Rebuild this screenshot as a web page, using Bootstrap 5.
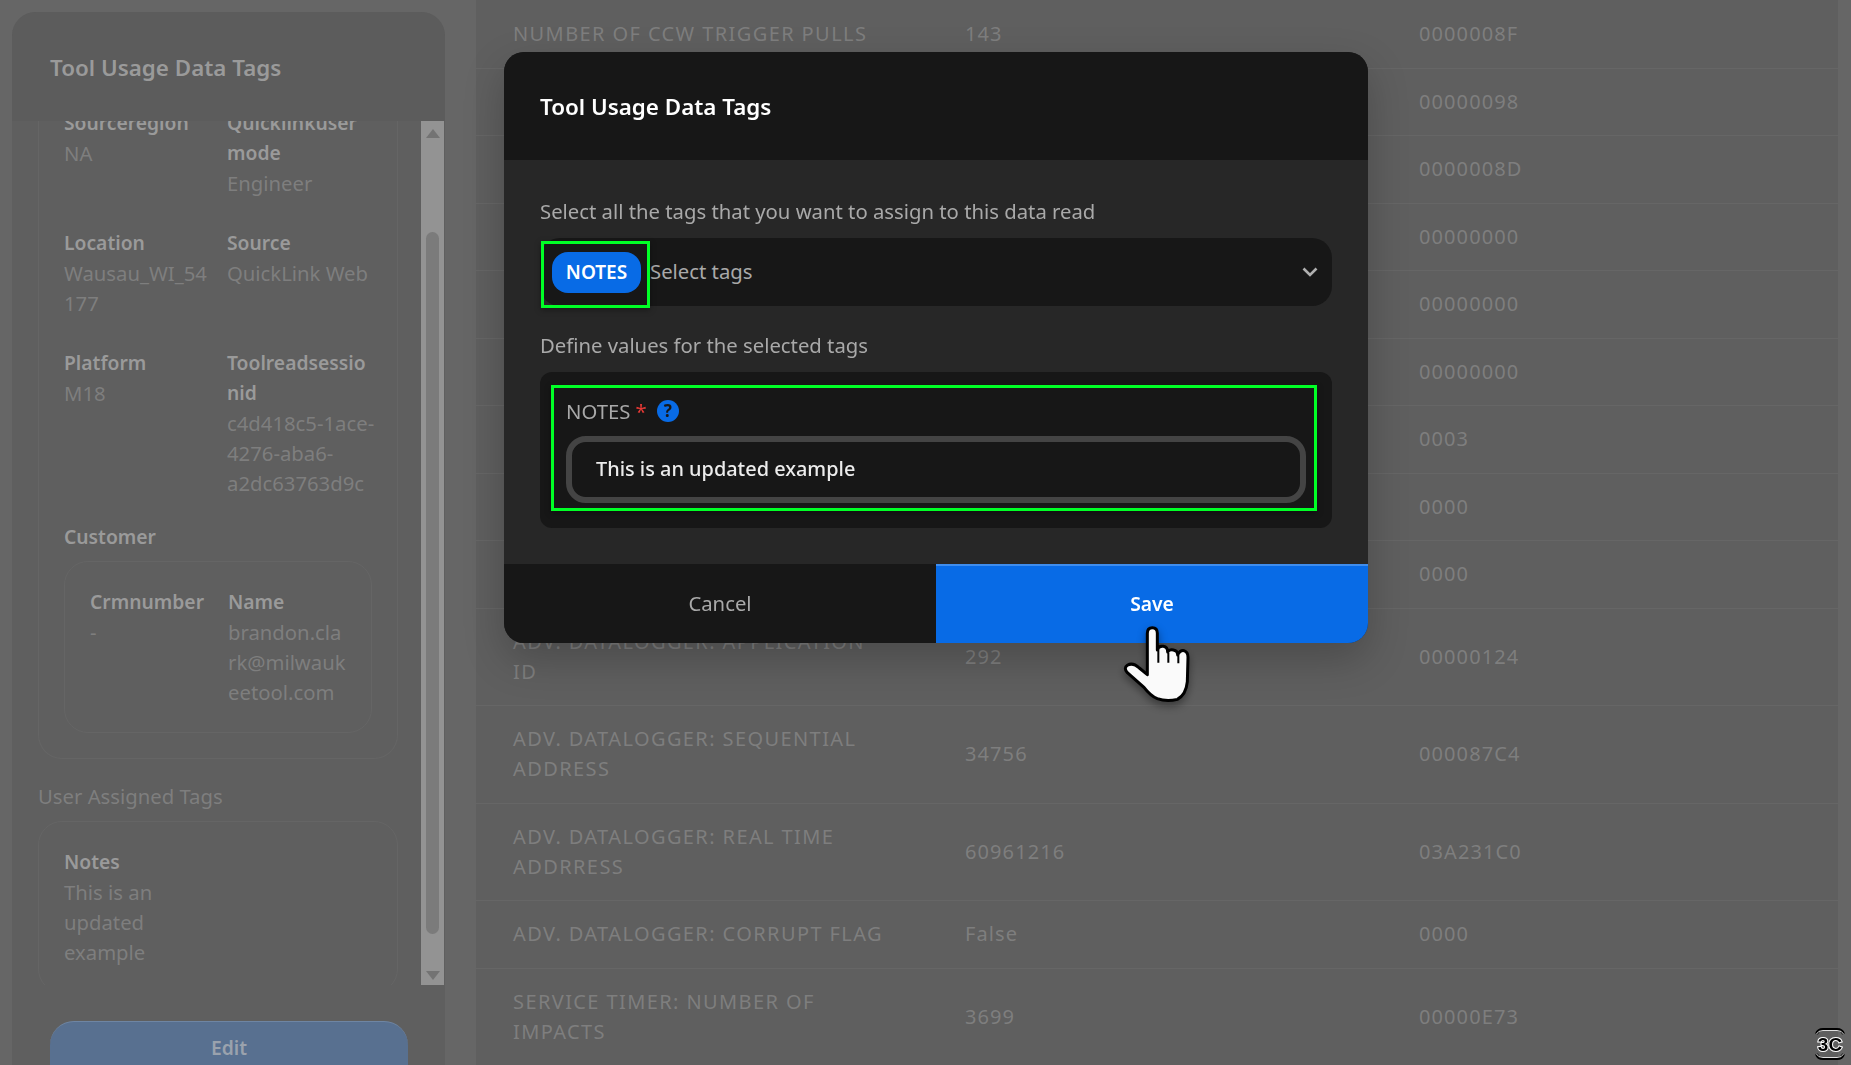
<!DOCTYPE html>
<html lang="en">
  <head>
    <meta charset="UTF-8" />
    <meta name="viewport" content="width=device-width, initial-scale=1.0" />
    <title>Tool Usage Data Tags</title>
    <link
      href="https://cdn.jsdelivr.net/npm/bootstrap@5.3.3/dist/css/bootstrap.min.css"
      rel="stylesheet"
    />
    <style>
      html,
      body {
        height: 100%;
        overflow: hidden;
      }
      body {
        background-color: #666666;
        font-family: "Noto Sans", "Liberation Sans", sans-serif;
        font-size: 20.3px;
        line-height: 30px;
        color: #7e7e7e;
      }
      .page-wrap {
        height: 1065px;
      }
      /* left panel */
      .side-col {
        width: 476px;
        padding: 12px 31px 0 12px;
        flex: none;
      }
      .side-panel {
        height: 100%;
        background-color: #5f5f5f;
        border-radius: 24px 24px 0 0;
      }
      .side-head {
        height: 108.5px;
        padding: 3px 0 0 38px;
        background-color: #5c5c5c;
        border-radius: 24px 24px 0 0;
        color: #9a9a9a;
        font-size: 22.4px;
        font-weight: 600;
      }
      .side-scroll {
        height: 864.5px;
      }
      .side-inner {
        padding-left: 26px;
        width: 409px;
      }
      .side-body {
        width: 360px;
        margin-top: -12.5px;
      }
      .kv-box {
        border: 1px solid #656565;
        border-radius: 24px;
        padding: 25px;
      }
      .kv-first {
        border-top: 0;
        border-radius: 0 0 24px 24px;
        padding-top: 0;
      }
      .kv-grid {
        display: grid;
        grid-template-columns: 163px 150px;
        row-gap: 30px;
      }
      .kv-grid-in {
        grid-template-columns: 138px 120px;
      }
      .kv-grid-note {
        grid-template-columns: 125px;
      }
      .kv-grid b,
      .kv-title {
        display: block;
        font-size: 19.3px;
        font-weight: 600;
        color: #9a9a9a;
      }
      .kv-title {
        margin-bottom: 9px;
      }
      .sec-title {
        margin: 22px 0 10px;
      }
      .fake-bar {
        width: 23px;
        background-color: #939393;
        padding: 0 5px;
      }
      .bar-up,
      .bar-down {
        width: 0;
        border-left: 7px solid transparent;
        border-right: 7px solid transparent;
      }
      .bar-up {
        border-bottom: 9px solid #737373;
        margin-top: 8px;
      }
      .bar-down {
        border-top: 9px solid #737373;
        margin-top: 37px;
      }
      .bar-thumb {
        width: 13px;
        height: 702px;
        margin-top: 94px;
        border-radius: 7px;
        background-color: #7b7b7b;
      }
      .edit-btn {
        width: 358px;
        height: 54px;
        margin: 36px 0 0 38px;
        padding: 0;
        background-color: #587090;
        border: 0;
        border-top: 1px solid #6e85a3;
        border-radius: 24px 24px 0 0;
        color: #9aa2ad;
        font-size: 19.3px;
        font-weight: 600;
      }
      /* table behind the dialog */
      .main-col {
        width: 1362px;
        flex: none;
        background-color: #5f5f5f;
      }
      .reg-table {
        width: 100%;
        table-layout: fixed;
        border-collapse: collapse;
        margin-top: 1px;
        letter-spacing: 1.1px;
        font-size: 20px;
        color: #7e7e7e;
      }
      .reg-table td {
        padding: 18.25px 0;
        border-bottom: 1px solid #666666;
        vertical-align: middle;
      }
      .reg-table td:first-child {
        padding-left: 37px;
        padding-right: 76px;
        letter-spacing: 1.4px;
      }
      /* dialog */
      .tag-dialog {
        max-width: none;
        width: 864px;
        margin: 52px 0 0 504px;
      }
      .tag-content {
        height: 591px;
        overflow: hidden;
        border: 0;
        border-radius: 20px;
        background-color: #272727;
        box-shadow: 0 16px 40px rgba(0, 0, 0, 0.22);
        color: #a9a9a9;
      }
      .tag-head {
        height: 108px;
        padding: 2px 36px 0;
        border: 0;
        border-radius: 0;
        background-color: #171717;
        color: #ffffff;
        font-size: 22.4px;
        font-weight: 600;
      }
      .tag-body {
        padding: 36px 36px 36px;
      }
      .tag-select {
        height: 68px;
        margin: 12px 0 24px;
        padding: 0 14px 0 12px;
        border-radius: 20px;
        background-color: #171717;
      }
      .tag-pill {
        width: 89px;
        height: 41px;
        margin-right: 9px;
        border-radius: 16px;
        background-color: #086be6;
        color: #ffffff;
        font-weight: 600;
        font-size: 19px;
      }
      .select-hint {
        padding-bottom: 2px;
      }
      .mark-one,
      .mark-two {
        position: absolute;
        border: 3px solid #00ff26;
        box-shadow: 0 2px 6px rgba(0, 0, 0, 0.35);
        pointer-events: none;
      }
      .mark-one {
        left: 1px;
        top: 3px;
        width: 109px;
        height: 67px;
      }
      .mark-two {
        left: 11px;
        top: 13px;
        width: 766px;
        height: 126px;
      }
      .value-panel {
        height: 156px;
        margin-top: 12px;
        padding: 24px 26px;
        border-radius: 12px;
        background-color: #171717;
      }
      .req-star {
        color: #e53935;
      }
      .help-dot {
        width: 22px;
        height: 22px;
        margin-left: 10px;
        background-color: #086be6;
        color: #171717;
        font-size: 17px;
        font-weight: 700;
        line-height: 22px;
      }
      .note-input,
      .note-input:focus {
        height: 67px;
        margin-top: 10px;
        padding: 0 24px 2px;
        border: 6px solid #444444;
        border-radius: 20px;
        background-color: #171717;
        box-shadow: none;
        color: #ececec;
        font-size: 19.9px;
        font-weight: 500;
      }
      .tag-foot {
        height: 79px;
      }
      .foot-btn {
        width: 432px;
        border: 0;
        border-radius: 0;
        font-size: 20.3px;
      }
      .foot-cancel,
      .foot-cancel:hover {
        background-color: #171717;
        color: #a9a9a9;
      }
      .foot-save,
      .foot-save:hover {
        background-color: #086be6;
        border-top: 2px solid #3f8ded;
        color: #ffffff;
        font-size: 19.3px;
        font-weight: 600;
      }
      /* cursor and recorder logo on top of everything */
      .hand-cursor {
        position: fixed;
        left: 1100px;
        top: 600px;
        z-index: 2000;
        filter: drop-shadow(0 4px 4px rgba(0, 0, 0, 0.4));
      }
      .rec-logo {
        position: fixed;
        left: 1815px;
        top: 1028px;
        z-index: 2000;
      }
      .rec-logo text {
        font-family: "Liberation Sans", sans-serif;
        font-size: 19px;
        font-weight: 700;
        fill: #000000;
        stroke: #ffffff;
        stroke-width: 2px;
        paint-order: stroke;
      }
    </style>
  </head>
  <body>
    <div class="page-wrap d-flex">
      <!-- Left panel -->
      <div class="side-col">
        <div class="side-panel d-flex flex-column">
          <div class="side-head d-flex align-items-center flex-shrink-0">Tool Usage Data Tags</div>
          <div class="side-scroll d-flex overflow-hidden flex-shrink-0">
            <div class="side-inner overflow-hidden">
              <div class="side-body">
                <div class="kv-box kv-first">
                  <div class="kv-grid">
                    <div><b>Sourceregion</b>NA</div>
                    <div><b>Quicklinkuser mode</b>Engineer</div>
                    <div><b>Location</b>Wausau_WI_54<br />177</div>
                    <div><b>Source</b>QuickLink Web</div>
                    <div><b>Platform</b>M18</div>
                    <div><b>Toolreadsessio<br />nid</b>c4d418c5-1ace-<br />4276-aba6-<br />a2dc63763d9c</div>
                  </div>
                  <div class="kv-title mt-4">Customer</div>
                  <div class="kv-box">
                    <div class="kv-grid kv-grid-in">
                      <div><b>Crmnumber</b>-</div>
                      <div><b>Name</b>brandon.cla<br />rk@milwauk<br />eetool.com</div>
                    </div>
                  </div>
                </div>
                <div class="sec-title">User Assigned Tags</div>
                <div class="kv-box">
                  <div class="kv-grid kv-grid-note">
                    <div><b>Notes</b>This is an<br />updated<br />example</div>
                  </div>
                </div>
              </div>
            </div>
            <div class="fake-bar flex-none">
              <div class="bar-up"></div>
              <div class="bar-thumb"></div>
              <div class="bar-down"></div>
            </div>
          </div>
          <button type="button" class="btn edit-btn flex-shrink-0">Edit</button>
        </div>
      </div>

      <!-- Register table -->
      <div class="main-col overflow-hidden">
        <table class="reg-table">
          <colgroup>
            <col style="width: 489px" />
            <col style="width: 454px" />
            <col />
          </colgroup>
          <tbody id="regRows"></tbody>
        </table>
      </div>
    </div>

    <!-- Dialog -->
    <div class="modal d-block" tabindex="-1">
      <div class="modal-dialog tag-dialog">
        <div class="modal-content tag-content">
          <div class="modal-header tag-head">Tool Usage Data Tags</div>
          <div class="modal-body tag-body flex-fill">
            <div>Select all the tags that you want to assign to this data read</div>
            <div class="tag-select d-flex align-items-center position-relative">
              <span class="tag-pill d-flex align-items-center justify-content-center">NOTES</span>
              <span class="select-hint flex-fill">Select tags</span>
              <svg width="16" height="10" viewBox="0 0 16 10">
                <polyline points="1.5,1.5 8,8 14.5,1.5" fill="none" stroke="#b0b0b0" stroke-width="2.6" />
              </svg>
              <span class="mark-one"></span>
            </div>
            <div>Define values for the selected tags</div>
            <div class="value-panel position-relative">
              <div class="d-flex align-items-center">
                NOTES&nbsp;<span class="req-star">*</span>
                <span class="help-dot rounded-circle d-inline-flex justify-content-center">?</span>
              </div>
              <input class="form-control note-input" type="text" value="This is an updated example" />
              <span class="mark-two"></span>
            </div>
          </div>
          <div class="tag-foot d-flex">
            <button type="button" class="btn foot-btn foot-cancel">Cancel</button>
            <button type="button" class="btn foot-btn foot-save">Save</button>
          </div>
        </div>
      </div>
    </div>

    <!-- Hand cursor -->
    <svg class="hand-cursor" width="120" height="120" viewBox="0 0 360 360">
      <path
        d="M142 100 Q142 83 157 83 Q172 83 172 100 L172 150 Q175 137 190 139 Q203 141 203 156 Q208 148 220 150 Q233 152 233 165 Q240 150 252 152 Q264 156 264 172 L262 245 Q258 285 232 298 Q200 306 172 296 Q152 288 132 262 L82 218 Q70 204 82 196 Q98 186 118 204 L142 224 Z"
        fill="#fafafa"
        stroke="#000000"
        stroke-width="9"
        stroke-linejoin="round"
      />
      <path d="M175 148 V188 M205 158 V188 M235 166 V190" fill="none" stroke="#000000" stroke-width="6" />
    </svg>

    <!-- Recorder logo -->
    <svg class="rec-logo" width="30" height="32" viewBox="0 0 30 32">
      <path d="M1.5 6 Q3 1.5 8 1.5 H22 Q27 1.5 28.5 6" fill="none" stroke="#000" stroke-width="3" />
      <path d="M1.5 6 Q3 2.5 8 2.5 H22 Q27 2.5 28.5 6" fill="none" stroke="#ddd" stroke-width="1" />
      <text x="15" y="23" text-anchor="middle">3C</text>
      <path d="M1.5 26 Q3 30.5 8 30.5 H22 Q27 30.5 28.5 26" fill="none" stroke="#000" stroke-width="3" />
      <path d="M1.5 26 Q3 29.5 8 29.5 H22 Q27 29.5 28.5 26" fill="none" stroke="#ddd" stroke-width="1" />
    </svg>

    <script src="https://cdn.jsdelivr.net/npm/bootstrap@5.3.3/dist/js/bootstrap.bundle.min.js"></script>
    <script>
      // Rows 2-9 sit behind the dialog, only the hex column shows
      const rows = [
        ["NUMBER OF CCW TRIGGER PULLS", "143", "0000008F"],
        ["", "", "00000098"],
        ["", "", "0000008D"],
        ["", "", "00000000"],
        ["", "", "00000000"],
        ["", "", "00000000"],
        ["", "", "0003"],
        ["", "", "0000"],
        ["", "", "0000"],
        ["ADV. DATALOGGER: APPLICATION ID", "292", "00000124"],
        ["ADV. DATALOGGER: SEQUENTIAL ADDRESS", "34756", "000087C4"],
        ["ADV. DATALOGGER: REAL TIME ADDRRESS", "60961216", "03A231C0"],
        ["ADV. DATALOGGER: CORRUPT FLAG", "False", "0000"],
        ["SERVICE TIMER: NUMBER OF IMPACTS", "3699", "00000E73"],
      ];
      const body = document.getElementById("regRows");
      rows.forEach((r) => {
        const tr = document.createElement("tr");
        tr.innerHTML = `<td>${r[0] || "&nbsp;"}</td><td>${r[1]}</td><td>${r[2]}</td>`;
        body.appendChild(tr);
      });
    </script>
  </body>
</html>
